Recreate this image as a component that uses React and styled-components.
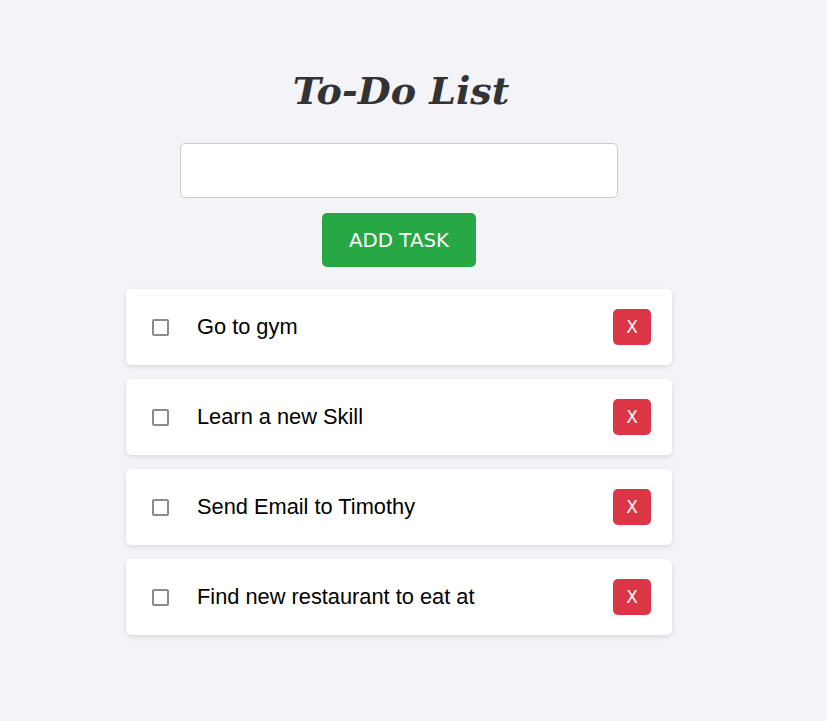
import React, { useState } from 'react'
import styled, { createGlobalStyle } from 'styled-components'

const GlobalStyle = createGlobalStyle`
  html, body {
    margin: 0;
    padding: 0;
    background: #f4f4f8;
  }
`

const Page = styled.div`
  width: 798px;
  min-height: 721px;
  display: flex;
  flex-direction: column;
  align-items: center;
  padding-top: 63px;
  box-sizing: border-box;
  font-family: "Liberation Sans", Arial, sans-serif;
`

const Title = styled.h1`
  margin: 0 0 24px;
  font-family: "DejaVu Serif", "Liberation Serif", serif;
  font-style: italic;
  font-weight: 700;
  font-size: 38px;
  line-height: 56px;
  color: #333;
  padding-left: 4px;
`

const TaskInput = styled.input`
  width: 438px;
  height: 55px;
  box-sizing: border-box;
  border: 1px solid #ccc;
  border-radius: 5px;
  background: #fff;
  padding: 0 12px;
  font-size: 18px;
  font-family: "Liberation Sans", Arial, sans-serif;
  outline: none;
`

const AddButton = styled.button`
  margin-top: 15px;
  width: 154px;
  height: 54px;
  border: none;
  border-radius: 5px;
  background: #28a745;
  color: #fff;
  font-family: "DejaVu Sans", Verdana, sans-serif;
  font-size: 19.8px;
  cursor: pointer;
`

const List = styled.ul`
  list-style: none;
  margin: 22px 0 0;
  padding: 0;
  width: 546px;
  display: flex;
  flex-direction: column;
  gap: 14px;
`

const Item = styled.li`
  height: 76px;
  box-sizing: border-box;
  background: #fff;
  border-radius: 5px;
  box-shadow: 0 2px 5px rgba(0, 0, 0, 0.1);
  display: flex;
  align-items: center;
  padding: 0 21px 0 26px;
`

const Check = styled.input`
  appearance: none;
  width: 17px;
  height: 17px;
  margin: 0;
  border: 2px solid #8a8a92;
  border-radius: 2px;
  box-sizing: border-box;
  background: #fff;
`

const Text = styled.span`
  flex: 1;
  margin-left: 28px;
  font-size: 21.8px;
  color: #000;
`

const DeleteButton = styled.button`
  width: 38px;
  height: 36px;
  border: none;
  border-radius: 5px;
  background: #dc3545;
  color: #fff;
  font-family: "DejaVu Sans", Verdana, sans-serif;
  font-size: 17px;
  padding: 0;
  cursor: pointer;
`

export default function App() {
  const [tasks] = useState([
    'Go to gym',
    'Learn a new Skill',
    'Send Email to Timothy',
    'Find new restaurant to eat at',
  ])

  return (
    <>
      <GlobalStyle />
      <Page>
        <Title>To-Do List</Title>
        <TaskInput type="text" />
        <AddButton>ADD TASK</AddButton>
        <List>
          {tasks.map((t) => (
            <Item key={t}>
              <Check type="checkbox" />
              <Text>{t}</Text>
              <DeleteButton>X</DeleteButton>
            </Item>
          ))}
        </List>
      </Page>
    </>
  )
}
